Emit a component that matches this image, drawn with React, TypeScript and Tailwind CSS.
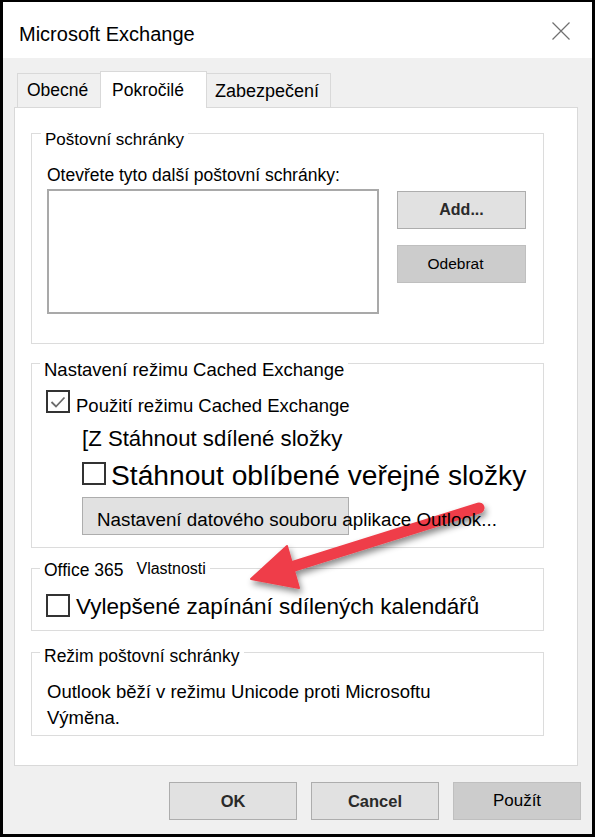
const btn = 'border border-[#adadad] bg-[#e1e1e1] flex items-center justify-center';
const btnOff = 'border border-[#bfbfbf] bg-[#cccccc] flex items-center justify-center';

function Checkbox({ checked }: { checked?: boolean }) {
  return (
    <div className="w-[24px] h-[23px] shrink-0 border-2 border-[#333333] bg-white flex items-center justify-center">
      {checked && (
        <svg width="16" height="14" viewBox="0 0 16 14">
          <path d="M1.5 7 L6 11.5 L14.5 2.5" fill="none" stroke="#6b6b6b" strokeWidth="1.8" />
        </svg>
      )}
    </div>
  );
}

function Arrow() {
  return (
    <svg
      className="absolute left-[-3px] top-[-2px] pointer-events-none"
      width="595"
      height="837"
      viewBox="0 0 595 837"
    >
      <defs>
        <filter id="shadow" x="-20%" y="-20%" width="140%" height="160%">
          <feDropShadow dx="2" dy="4" stdDeviation="3" floodColor="#000" floodOpacity="0.45" />
        </filter>
      </defs>
      <g filter="url(#shadow)" fill="#ef3d48" stroke="#ef3d48">
        <line x1="291" y1="567" x2="479" y2="508" strokeWidth="11" strokeLinecap="round" />
        <polygon points="251,579 287,546 299,588" strokeWidth="2" strokeLinejoin="round" />
      </g>
    </svg>
  );
}

export default function App() {
  return (
    <div className="relative w-[595px] h-[837px] border-[3px] border-t-2 border-black bg-[#f0f0f0] flex flex-col text-black font-['Liberation_Sans',Arial,sans-serif]">
      {/* title bar */}
      <div className="h-[56px] bg-white flex items-start justify-between">
        <div className="pl-[16px] pt-[22px] text-[20px] leading-none">Microsoft Exchange</div>
        <svg className="mt-[20px] mr-[22px]" width="18" height="18" viewBox="0 0 18 18">
          <path d="M0.5 0.5 L17.5 17.5 M17.5 0.5 L0.5 17.5" stroke="#707070" strokeWidth="1.2" />
        </svg>
      </div>

      <div className="flex-1 flex flex-col pl-[11px] pr-[14px]">
        {/* tabs */}
        <div className="flex items-end h-[49px] ml-[3px]">
          <div className="w-[83px] h-[34px] border border-r-0 border-b-0 border-[#d9d9d9] pl-[9px] pt-[8px] text-[17.5px] leading-none">
            Obecné
          </div>
          <div className="relative z-10 -mb-px w-[107px] h-[37px] bg-white border border-b-0 border-[#d9d9d9] pl-[11px] pt-[10px] text-[17.5px] leading-none">
            Pokročilé
          </div>
          <div className="w-[124px] h-[34px] border border-l-0 border-b-0 border-[#d9d9d9] pl-[8px] pt-[8px] text-[18px] leading-none">
            Zabezpečení
          </div>
        </div>

        {/* panel */}
        <div className="h-[659px] border border-[#d9d9d9] bg-white flex flex-col">
          {/* Poštovní schránky */}
          <div className="mt-[25px] ml-[16px] w-[513px] h-[211px] border border-[#dcdcdc] flex flex-col">
            <div className="-mt-[3px] ml-[9px] px-[4px] w-fit bg-white text-[17px] leading-[17px]">Poštovní schránky</div>
            <div className="mt-[18px] ml-[15px] text-[17.5px] leading-[18px]">Otevřete tyto další poštovní schránky:</div>
            <div className="mt-[5px] ml-[15px] flex">
              <div className="w-[332px] h-[125px] border-2 border-[#a9a9a9] bg-white" />
              <div className="ml-[18px] mt-[2px] flex flex-col gap-[16px]">
                <div className={`${btn} w-[129px] h-[38px] text-[16px] font-bold text-[#2a2a2a]`}>Add...</div>
                <div className={`${btnOff} w-[129px] h-[38px] pr-[12px] text-[15.5px]`}>Odebrat</div>
              </div>
            </div>
          </div>

          {/* Cached Exchange */}
          <div className="mt-[19px] ml-[16px] w-[513px] h-[185px] border border-[#dcdcdc] flex flex-col">
            <div className="-mt-[4px] ml-[8px] px-[4px] w-fit bg-white text-[18.5px] leading-[19px]">
              Nastavení režimu Cached Exchange
            </div>
            <div className="mt-[11px] ml-[14px] flex items-start gap-[6px]">
              <Checkbox checked />
              <div className="mt-[6px] text-[18.5px] leading-[19px]">Použití režimu Cached Exchange</div>
            </div>
            <div className="mt-[13px] ml-[50px] text-[22.2px] leading-[22px]">[Z Stáhnout sdílené složky</div>
            <div className="mt-[12px] ml-[50px] flex items-start gap-[5px]">
              <Checkbox />
              <div className="-mt-[1px] text-[28.2px] leading-[29px] whitespace-nowrap">Stáhnout oblíbené veřejné složky</div>
            </div>
            <div className={`${btn} !justify-start !items-start mt-[7px] ml-[50px] w-[267px] h-[38px] pl-[14px] pt-[12px]`}>
              <span className="relative z-20 text-[18.8px] leading-[19px] whitespace-nowrap">
                Nastavení datového souboru aplikace Outlook...
              </span>
            </div>
          </div>

          {/* Office 365 */}
          <div className="mt-[20px] ml-[16px] w-[513px] h-[63px] border border-[#dcdcdc] flex flex-col">
            <div className="-mt-[8px] ml-[8px] px-[4px] w-fit bg-white flex items-end gap-[13px]">
              <span className="text-[17.5px] leading-[18px]">Office 365</span>
              <span className="mb-[2px] text-[16px] leading-[16px]">Vlastnosti</span>
            </div>
            <div className="mt-[15px] ml-[14px] flex items-start gap-[6px]">
              <Checkbox />
              <div className="mt-[1px] text-[22.5px] leading-[23px] whitespace-nowrap">
                Vylepšené zapínání sdílených kalendářů
              </div>
            </div>
          </div>

          {/* Režim poštovní schránky */}
          <div className="mt-[21px] ml-[16px] w-[513px] h-[84px] border border-[#dcdcdc] flex flex-col">
            <div className="-mt-[6px] ml-[8px] px-[4px] w-fit bg-white text-[17.5px] leading-[18px]">Režim poštovní schránky</div>
            <div className="mt-[14px] ml-[15px] text-[18.5px] leading-[26px]">
              Outlook běží v režimu Unicode proti Microsoftu
              <br />
              Výměna.
            </div>
          </div>
        </div>

        {/* dialog buttons */}
        <div className="mt-[16px] -mr-[3px] flex justify-end gap-[14px]">
          <div className={`${btn} w-[128px] h-[38px] text-[16.5px] font-bold text-[#2a2a2a]`}>OK</div>
          <div className={`${btn} w-[128px] h-[38px] text-[16.5px] font-bold text-[#2a2a2a]`}>Cancel</div>
          <div className={`${btnOff} w-[128px] h-[38px] text-[17px]`}>Použít</div>
        </div>
      </div>

      <Arrow />
    </div>
  );
}
